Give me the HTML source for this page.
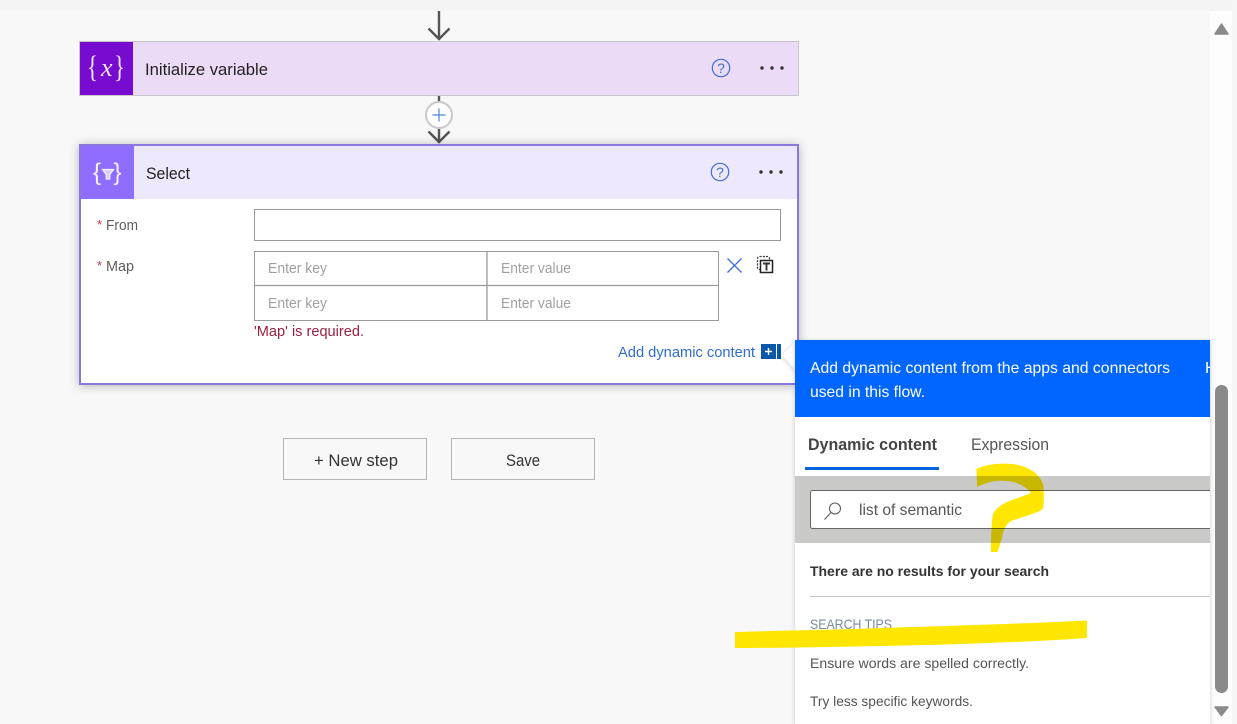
<!DOCTYPE html>
<html lang="en">
<head>
<meta charset="utf-8">
<title>Flow editor</title>
<style>
html,body{margin:0;padding:0;width:1237px;height:724px;overflow:hidden;background:#f8f8f8}
svg{display:block;font-family:"Liberation Sans",sans-serif}
</style>
</head>
<body>
<svg width="1237" height="724" viewBox="0 0 1237 724" xmlns="http://www.w3.org/2000/svg">
<defs>
<filter id="sh" x="-5%" y="-5%" width="110%" height="115%"><feDropShadow dx="0" dy="1" stdDeviation="5" flood-color="#000" flood-opacity=".28"/></filter>
<filter id="sh2" x="-20%" y="-10%" width="140%" height="120%"><feDropShadow dx="0" dy="1" stdDeviation="2.500" flood-color="#000" flood-opacity=".2"/></filter>
<clipPath id="panel"><rect x="795" y="340" width="415" height="384"/></clipPath>
</defs>

<rect width="1237" height="724" fill="#f8f8f8"/>
<rect width="1237" height="11" fill="#f4f4f4"/>
<rect x="1210" y="11" width="22" height="713" fill="#fdfdfd"/>
<rect x="1232" y="0" width="5" height="724" fill="#f5f5f5"/>

<!-- top arrow -->
<path d="M439 11V39M428.500 28.500L439 39L449.500 28.500" fill="none" stroke="#555" stroke-width="2.400"/>

<!-- card 1 -->
<rect x="79.500" y="41.500" width="719" height="54" fill="#ecdbf7" stroke="#c8c6c8"/>
<rect x="80" y="42" width="53" height="53" fill="#770bd0"/>
<text x="87" y="77" font-family="'Liberation Serif',serif" font-size="31" fill="#f3e8fb" textLength="11" lengthAdjust="spacingAndGlyphs">{</text>
<text x="101" y="76" font-family="'Liberation Serif',serif" font-style="italic" font-size="26" fill="#f3e8fb">x</text>
<text x="114" y="77" font-family="'Liberation Serif',serif" font-size="31" fill="#f3e8fb" textLength="11" lengthAdjust="spacingAndGlyphs">}</text>
<text x="145" y="75" font-size="17" fill="#222" textLength="123" lengthAdjust="spacingAndGlyphs">Initialize variable</text>
<circle cx="721" cy="68" r="8.700" fill="none" stroke="#3d6fd9" stroke-width="1.200"/>
<text x="721" y="73" font-size="14" fill="#3d6fd9" text-anchor="middle">?</text>
<circle cx="762" cy="68" r="1.700" fill="#333"/><circle cx="772" cy="68" r="1.700" fill="#333"/><circle cx="782" cy="68" r="1.700" fill="#333"/>

<!-- connector -->
<path d="M439 96V104" stroke="#555" stroke-width="2.400"/>
<path d="M439 126V143M428.500 131.500L439 142L449.500 131.500" fill="none" stroke="#555" stroke-width="2.400"/>
<circle cx="439" cy="115" r="13" fill="#fff" stroke="#c9c9c9" stroke-width="2"/>
<path d="M439 108.500V121.500M432.500 115H445.500" stroke="#4a86d8" stroke-width="1.200"/>

<!-- card 2 -->
<rect x="80" y="145" width="718" height="239" fill="#fff" stroke="#8c78dc" stroke-width="2" filter="url(#sh)"/>
<rect x="81" y="146" width="716" height="53" fill="#eee8fd"/>
<rect x="81" y="146" width="53" height="53" fill="#8f6eff"/>
<text x="93" y="180" font-size="24" fill="#f6f3ff" textLength="8" lengthAdjust="spacingAndGlyphs">{</text>
<text x="113.500" y="180" font-size="24" fill="#f6f3ff" textLength="8" lengthAdjust="spacingAndGlyphs">}</text>
<path d="M102.500 169.500H113.500L109.800 174.500V179H106.200V174.500Z" fill="#d9ceff" stroke="#f6f3ff" stroke-width="1.200"/>
<text x="146" y="179" font-size="17" fill="#222" textLength="44" lengthAdjust="spacingAndGlyphs">Select</text>
<circle cx="720" cy="172" r="8.700" fill="none" stroke="#3d6fd9" stroke-width="1.200"/>
<text x="720" y="177" font-size="14" fill="#3d6fd9" text-anchor="middle">?</text>
<circle cx="761" cy="172" r="1.700" fill="#333"/><circle cx="771" cy="172" r="1.700" fill="#333"/><circle cx="781" cy="172" r="1.700" fill="#333"/>

<!-- form -->
<text x="97" y="229" font-size="13" fill="#c4314b">*</text>
<text x="106" y="230" font-size="15" fill="#605e5c" textLength="32" lengthAdjust="spacingAndGlyphs">From</text>
<text x="97" y="270" font-size="13" fill="#c4314b">*</text>
<text x="106" y="271" font-size="15" fill="#605e5c" textLength="28" lengthAdjust="spacingAndGlyphs">Map</text>
<rect x="254.500" y="209.500" width="526" height="31" fill="#fff" stroke="#9a9a9a"/>
<rect x="254.500" y="251.500" width="464" height="69" fill="#fff" stroke="#9a9a9a"/>
<path d="M255 285.500H718M487 252V320" stroke="#9a9a9a" fill="none" stroke-width="1.300"/>
<g font-size="14.500" fill="#a0a0a0">
<text x="268" y="273" textLength="59" lengthAdjust="spacingAndGlyphs">Enter key</text>
<text x="268" y="308" textLength="59" lengthAdjust="spacingAndGlyphs">Enter key</text>
<text x="501" y="273" textLength="70" lengthAdjust="spacingAndGlyphs">Enter value</text>
<text x="501" y="308" textLength="70" lengthAdjust="spacingAndGlyphs">Enter value</text>
</g>
<path d="M727.500 258.500L741.500 272.500M741.500 258.500L727.500 272.500" stroke="#3d6fd9" stroke-width="1.300" fill="none"/>
<rect x="757.500" y="256.500" width="12" height="13" rx="2" fill="none" stroke="#333" stroke-width="1.200" stroke-dasharray="2 1.300"/>
<rect x="760.500" y="260.500" width="12" height="12" fill="#fff" stroke="#222" stroke-width="1.500"/>
<path d="M763 263.500H770M766.500 263.500V270.500" stroke="#333" stroke-width="1.900" fill="none"/>
<text x="254" y="336" font-size="15" fill="#9c1f3f" textLength="110" lengthAdjust="spacingAndGlyphs">'Map' is required.</text>
<text x="618" y="357" font-size="15" fill="#2f6cd6" textLength="137" lengthAdjust="spacingAndGlyphs">Add dynamic content</text>
<rect x="761" y="344" width="15" height="15" fill="#0a57ab"/>
<path d="M765 351.500H772M768.500 348V355" stroke="#fff" stroke-width="1.400"/>
<rect x="777" y="344" width="4" height="15" fill="#0a57ab"/>

<!-- buttons -->
<rect x="283.500" y="438.500" width="143" height="41" fill="#f8f8f8" stroke="#b5b5b5"/>
<text x="314" y="466" font-size="17" fill="#333" textLength="84" lengthAdjust="spacingAndGlyphs">+ New step</text>
<rect x="451.500" y="438.500" width="143" height="41" fill="#f8f8f8" stroke="#b5b5b5"/>
<text x="506" y="466" font-size="17" fill="#333" textLength="34" lengthAdjust="spacingAndGlyphs">Save</text>

<!-- flyout -->
<path d="M797 341L782 355L797 372Z" fill="#fff" filter="url(#sh2)"/>
<rect x="795" y="340" width="415" height="384" fill="#fff" filter="url(#sh2)"/>
<rect x="795" y="340" width="415" height="77" fill="#0066ff"/>
<g clip-path="url(#panel)">
<text x="810" y="373" font-size="16" fill="#fff" textLength="360" lengthAdjust="spacingAndGlyphs">Add dynamic content from the apps and connectors</text>
<text x="810" y="397" font-size="16" fill="#fff" textLength="115" lengthAdjust="spacingAndGlyphs">used in this flow.</text>
<text x="1205" y="373" font-size="16" fill="#fff">H</text>
<text x="808" y="450" font-size="17" font-weight="bold" fill="#444" textLength="129" lengthAdjust="spacingAndGlyphs">Dynamic content</text>
<rect x="805" y="467" width="134" height="3" fill="#0066e0"/>
<text x="971" y="450" font-size="17" fill="#555" textLength="78" lengthAdjust="spacingAndGlyphs">Expression</text>
<rect x="795" y="476" width="415" height="67" fill="#c9cac8"/>
<rect x="810.500" y="490.500" width="420" height="38" rx="2" fill="#fff" stroke="#666"/>
<circle cx="835" cy="508.500" r="5.500" fill="none" stroke="#555" stroke-width="1"/>
<path d="M831 512.500L824.500 519.500" stroke="#555" stroke-width="1"/>
<text x="859" y="515" font-size="16" fill="#555" textLength="103" lengthAdjust="spacingAndGlyphs">list of semantic</text>
<text x="810" y="576" font-size="14" font-weight="bold" fill="#333" textLength="239" lengthAdjust="spacingAndGlyphs">There are no results for your search</text>
<rect x="810" y="596" width="400" height="1" fill="#c8c8c8"/>
<text x="810" y="629" font-size="14" fill="#7a8a9f" textLength="82" lengthAdjust="spacingAndGlyphs">SEARCH TIPS</text>
<text x="810" y="668" font-size="14" fill="#555" textLength="219" lengthAdjust="spacingAndGlyphs">Ensure words are spelled correctly.</text>
<text x="810" y="706" font-size="14" fill="#555" textLength="163" lengthAdjust="spacingAndGlyphs">Try less specific keywords.</text>
</g>

<!-- annotations -->
<path d="M735 632C800 630 830 630 880 628C950 626 1040 623 1087 620.500L1087 638C1030 642 950 645 880 646C830 647 790 648 735 648Z" fill="#ffe600"/>
<path d="M977 487L976.500 469C985 464 1005 462 1018 465C1032 468 1041 476 1043.500 486C1044 495 1044 503 1043 509C1035 514 1022 517 1011 521C1005 525 1003 531 1002 538L997.500 552L991 552C991 540 991 525 993 514C997 506 1006 502 1015 499C1023 496 1029 494 1031 493C1026 486 1016 481 1005 481C995 480 985 483 977 487Z" fill="#ffe600" style="mix-blend-mode:multiply"/>

<!-- scrollbar -->
<path d="M1221.500 24L1228 34H1215Z" fill="#8a8a8a" stroke="#8a8a8a" stroke-width="1.500" stroke-linejoin="round"/>
<rect x="1215" y="385" width="13" height="308" rx="6.500" fill="#8a8a8a"/>
<path d="M1215 707H1228L1221.500 715.500Z" fill="#8a8a8a" stroke="#8a8a8a" stroke-width="1.500" stroke-linejoin="round"/>
</svg>
</body>
</html>
